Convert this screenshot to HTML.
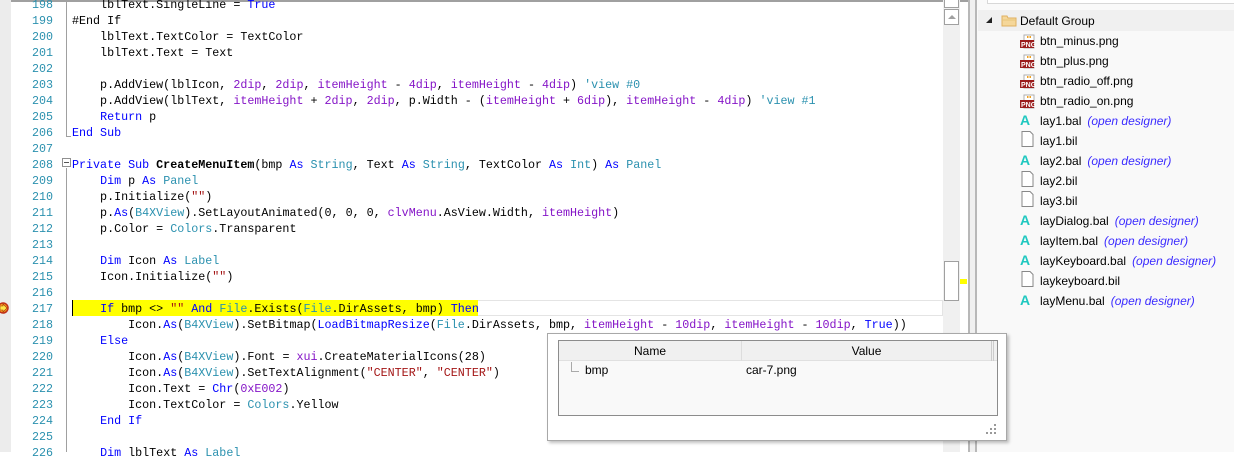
<!DOCTYPE html>
<html><head><meta charset="utf-8"><style>
*{margin:0;padding:0;box-sizing:border-box}
body{width:1234px;height:452px;overflow:hidden;background:#fff;position:relative;font-family:"Liberation Sans",sans-serif}
.ab{position:absolute}
#gut{left:0;top:0;width:11px;height:452px;background:#ececec}
.ln{position:absolute;left:12px;width:41px;text-align:right;font:11.7px/16px "Liberation Mono",monospace;color:#2b91af}
.cd{position:absolute;left:72px;white-space:pre;font:11.7px/16px "Liberation Mono",monospace;color:#000}
.k{color:#0000ff}.t{color:#2b91af}.p{color:#8515c7}.s{color:#a31515}.n{color:#8515c7}
.tree{position:absolute;left:1040px;font:12px/20px "Liberation Sans",sans-serif;color:#000;white-space:nowrap}
.od{color:#3b2bff;font-style:italic;margin-left:6px}
</style></head><body>
<div class="ab" style="left:0;top:0;width:968px;height:2px;background:#a0a0a0"></div>
<div class="ab" id="gut"></div>
<div class="ab" style="left:66px;top:0;width:1px;height:136px;background:#a0a0a0"></div>
<div class="ab" style="left:66px;top:136px;width:5px;height:1px;background:#a0a0a0"></div>
<div class="ab" style="left:66px;top:168px;width:1px;height:284px;background:#a0a0a0"></div>
<div class="ab" style="left:62px;top:158px;width:9px;height:9px;border:1px solid #909090;background:#fff"></div>
<div class="ab" style="left:64px;top:162px;width:5px;height:1px;background:#555"></div>
<div class="ab" style="left:72px;top:300px;width:871px;height:16px;border:1px solid #e4e4e4"></div>
<div class="ab" style="left:73px;top:300px;width:405px;height:16px;background:#ffff00"></div>
<div class="ab" style="left:72px;top:300px;width:1px;height:16px;background:#000"></div>
<svg class="ab" style="left:0;top:302px" width="9" height="12"><circle cx="3" cy="6" r="5" fill="#f59b1a" stroke="#c0301a" stroke-width="1.5"/><path d="M0 4h3V2l4 4-4 4V8H0z" fill="#ffe94a" stroke="#a03010" stroke-width=".6"/></svg>

<div class="ln" style="top:-3px">198<br>199<br>200<br>201<br>202<br>203<br>204<br>205<br>206<br>207<br>208<br>209<br>210<br>211<br>212<br>213<br>214<br>215<br>216<br>217<br>218<br>219<br>220<br>221<br>222<br>223<br>224<br>225<br>226</div>
<div class="cd" style="top:-3px">    lblText.SingleLine = <span class="k">True</span>
#End If
    lblText.TextColor = TextColor
    lblText.Text = Text

    p.AddView(lblIcon, <span class="n">2dip</span>, <span class="n">2dip</span>, <span class="p">itemHeight</span> - <span class="n">4dip</span>, <span class="p">itemHeight</span> - <span class="n">4dip</span>) <span class="t">'view #0</span>
    p.AddView(lblText, <span class="p">itemHeight</span> + <span class="n">2dip</span>, <span class="n">2dip</span>, p.Width - (<span class="p">itemHeight</span> + <span class="n">6dip</span>), <span class="p">itemHeight</span> - <span class="n">4dip</span>) <span class="t">'view #1</span>
    <span class="k">Return</span> p
<span class="k">End Sub</span>

<span class="k">Private Sub</span> <b>CreateMenuItem</b>(bmp <span class="k">As</span> <span class="t">String</span>, Text <span class="k">As</span> <span class="t">String</span>, TextColor <span class="k">As</span> <span class="t">Int</span>) <span class="k">As</span> <span class="t">Panel</span>
    <span class="k">Dim</span> p <span class="k">As</span> <span class="t">Panel</span>
    p.Initialize(<span class="s">""</span>)
    p.<span class="k">As</span>(<span class="t">B4XView</span>).SetLayoutAnimated(0, 0, 0, <span class="p">clvMenu</span>.AsView.Width, <span class="p">itemHeight</span>)
    p.Color = <span class="t">Colors</span>.Transparent

    <span class="k">Dim</span> Icon <span class="k">As</span> <span class="t">Label</span>
    Icon.Initialize(<span class="s">""</span>)

    <span class="k">If</span> bmp &lt;&gt; <span class="s">""</span> <span class="k">And</span> <span class="t">File</span>.Exists(<span class="t">File</span>.DirAssets, bmp) <span class="k">Then</span>
        Icon.<span class="k">As</span>(<span class="t">B4XView</span>).SetBitmap(<span class="k">LoadBitmapResize</span>(<span class="t">File</span>.DirAssets, bmp, <span class="p">itemHeight</span> - <span class="n">10dip</span>, <span class="p">itemHeight</span> - <span class="n">10dip</span>, <span class="k">True</span>))
    <span class="k">Else</span>
        Icon.<span class="k">As</span>(<span class="t">B4XView</span>).Font = <span class="p">xui</span>.CreateMaterialIcons(28)
        Icon.<span class="k">As</span>(<span class="t">B4XView</span>).SetTextAlignment(<span class="s">"CENTER"</span>, <span class="s">"CENTER"</span>)
        Icon.Text = <span class="k">Chr</span>(<span class="n">0xE002</span>)
        Icon.TextColor = <span class="t">Colors</span>.Yellow
    <span class="k">End If</span>

    <span class="k">Dim</span> lblText <span class="k">As</span> <span class="t">Label</span></div>

<div class="ab" style="left:943px;top:0;width:17px;height:452px;background:#f0f0f0"></div>
<div class="ab" style="left:944px;top:0;width:15px;height:8px;border:1px solid #a0a0a0;border-top:0;background:#fff"></div>
<div class="ab" style="left:944px;top:9px;width:15px;height:16px;border:1px solid #a0a0a0;background:#fff"></div>
<div class="ab" style="left:948px;top:15px;width:0;height:0;border-left:4px solid transparent;border-right:4px solid transparent;border-bottom:4px solid #a0a0a0"></div>
<div class="ab" style="left:944px;top:261px;width:15px;height:40px;border:1px solid #a0a0a0;background:#fff"></div>
<div class="ab" style="left:960px;top:279px;width:7px;height:5px;background:#ffff00"></div>
<div class="ab" style="left:968px;top:0;width:9px;height:452px;background:#f0f0f0;border-left:2px solid #b8b8b8;border-right:2px solid #b8b8b8"></div>
<div class="ab" style="left:977px;top:0;width:257px;height:452px;background:#f9f9f9"></div>
<div class="ab" style="left:987px;top:0;width:247px;height:4px;background:#fff;border:1px solid #d8d8d8;border-top:0;border-right:0"></div>
<div class="ab" style="left:978px;top:10px;width:256px;height:21px;background:#f0f0f0"></div>
<div class="ab" style="left:986px;top:17px;width:0;height:0;border-left:6px solid transparent;border-bottom:6px solid #222"></div>
<svg class="ab" style="left:1001px;top:14px" width="16" height="13"><path d="M1 2h5l1 2h8v8H1z" fill="#f5d79a" stroke="#e0b060"/><path d="M1 6h14" stroke="#e8c47a"/></svg>
<div class="tree" style="left:1020px;top:11px">Default Group</div>
<div class="tree" style="top:31px">btn_minus.png<br>btn_plus.png<br>btn_radio_off.png<br>btn_radio_on.png<br>lay1.bal<span class="od">(open designer)</span><br>lay1.bil<br>lay2.bal<span class="od">(open designer)</span><br>lay2.bil<br>lay3.bil<br>layDialog.bal<span class="od">(open designer)</span><br>layItem.bal<span class="od">(open designer)</span><br>layKeyboard.bal<span class="od">(open designer)</span><br>laykeyboard.bil<br>layMenu.bal<span class="od">(open designer)</span></div>
<div class="ab" style="left:1020px;top:34px">
<svg width="16" height="80">
<g id="png"><rect x="4" y="1" width="10" height="13" fill="#fff" stroke="#b0b0b0"/><path d="M7 3h5" stroke="#f0a020" stroke-width="2" stroke-dasharray="1.5 1"/><rect x="0" y="6" width="14" height="8" fill="#9a1c1c"/><text x="1" y="13" font-size="7" fill="#fff" font-family="Liberation Sans" font-weight="bold">PNG</text></g>
<use href="#png" y="20"/><use href="#png" y="40"/><use href="#png" y="60"/>
</svg></div>
<div class="ab" style="left:1020px;top:110px;font:bold 14px/20px 'Liberation Sans',sans-serif;color:#1fc8c0">A<br><br>A<br><br><br>A<br>A<br>A<br><br>A</div>
<svg class="ab" style="left:1021px;top:131px" width="14" height="160">
<g id="doc" fill="#fff" stroke="#888"><path d="M1 .5h8l3 3v12H1z"/></g>
<use href="#doc" y="40"/><use href="#doc" y="60"/><use href="#doc" y="140"/>
</svg>
<div class="ab" style="left:547px;top:333px;width:460px;height:108px;background:#fff;border:1px solid #a8a8a8;box-shadow:2px 2px 3px rgba(0,0,0,.25)"></div>
<div class="ab" style="left:558px;top:340px;width:440px;height:76px;background:#f9f9f9;border:1px solid #8c8c8c"></div>
<div class="ab" style="left:559px;top:341px;width:438px;height:20px;background:#f0f0f0;border-bottom:1px solid #e0e0e0"></div>
<div class="ab" style="left:741px;top:341px;width:1px;height:20px;background:#ddd"></div>
<div class="ab" style="left:991px;top:341px;width:3px;height:20px;border-left:1px solid #ccc;border-right:1px solid #ccc"></div>
<div class="ab" style="left:559px;top:344px;width:182px;text-align:center;font:12px 'Liberation Sans',sans-serif">Name</div>
<div class="ab" style="left:742px;top:344px;width:249px;text-align:center;font:12px 'Liberation Sans',sans-serif">Value</div>
<div class="ab" style="left:571px;top:362px;width:1px;height:9px;background:#aaa"></div>
<div class="ab" style="left:571px;top:371px;width:8px;height:1px;background:#aaa"></div>
<div class="ab" style="left:585px;top:363px;font:12px 'Liberation Sans',sans-serif">bmp</div>
<div class="ab" style="left:746px;top:363px;font:12px 'Liberation Sans',sans-serif">car-7.png</div>
<svg class="ab" style="left:986px;top:424px" width="12" height="12"><g fill="#999"><rect x="8" y="0" width="2" height="2"/><rect x="4" y="4" width="2" height="2"/><rect x="8" y="4" width="2" height="2"/><rect x="0" y="8" width="2" height="2"/><rect x="4" y="8" width="2" height="2"/><rect x="8" y="8" width="2" height="2"/></g></svg>
</body></html>
